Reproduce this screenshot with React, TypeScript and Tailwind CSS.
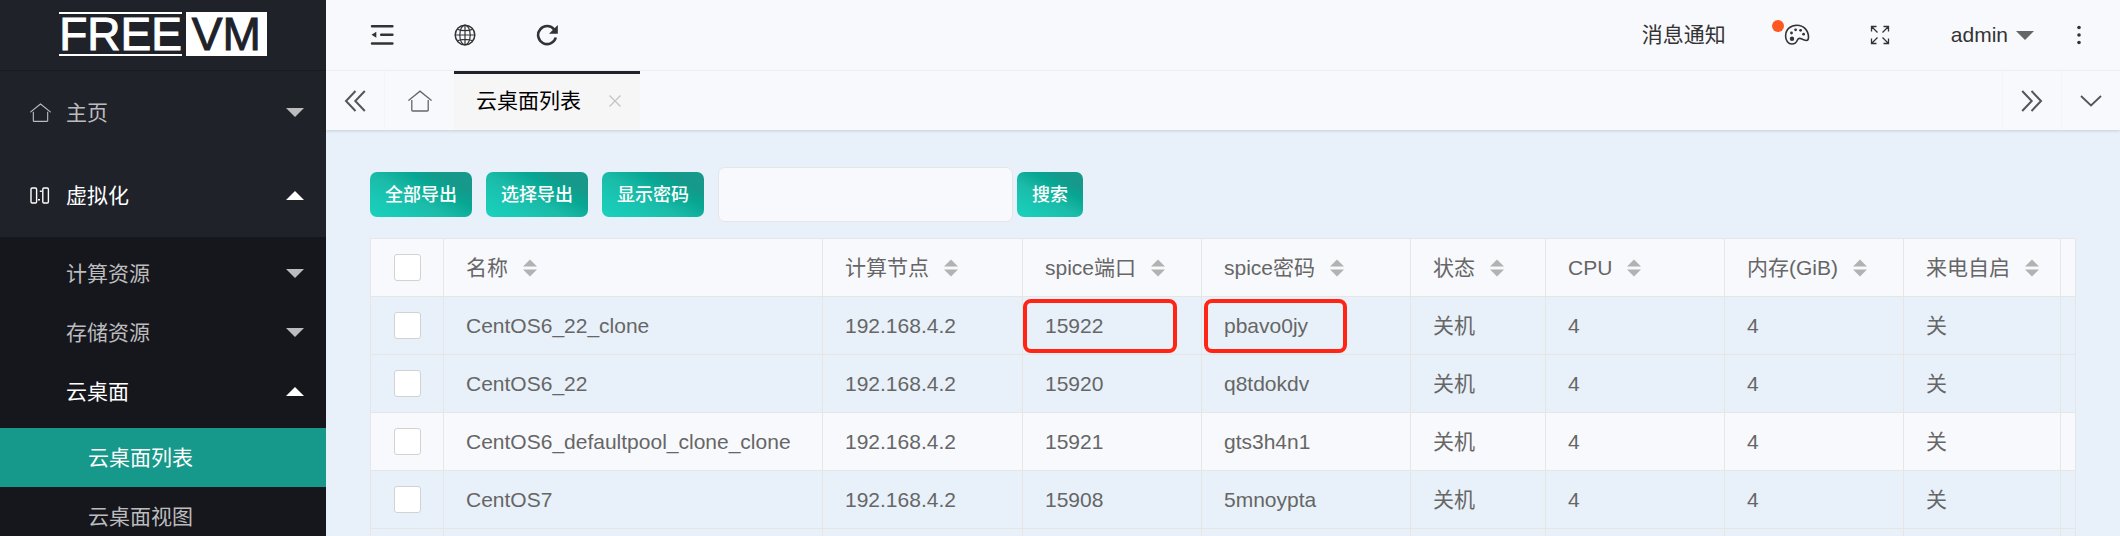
import { useState } from "react";
import type { ReactNode } from "react";
import clsx from "clsx";

interface Vm {
  name: string;
  node: string;
  port: string;
  password: string;
  state: string;
  cpu: number;
  memory: number;
  autostart: string;
  marked?: boolean;
}

const vms: Vm[] = [
  { name: "CentOS6_22_clone", node: "192.168.4.2", port: "15922", password: "pbavo0jy", state: "关机", cpu: 4, memory: 4, autostart: "关", marked: true },
  { name: "CentOS6_22", node: "192.168.4.2", port: "15920", password: "q8tdokdv", state: "关机", cpu: 4, memory: 4, autostart: "关" },
  { name: "CentOS6_defaultpool_clone_clone", node: "192.168.4.2", port: "15921", password: "gts3h4n1", state: "关机", cpu: 4, memory: 4, autostart: "关" },
  { name: "CentOS7", node: "192.168.4.2", port: "15908", password: "5mnoypta", state: "关机", cpu: 4, memory: 4, autostart: "关" },
];

const columns = [
  { label: "名称", width: "" },
  { label: "计算节点", width: "w-[200px]" },
  { label: "spice端口", width: "w-[179px]" },
  { label: "spice密码", width: "w-[209px]" },
  { label: "状态", width: "w-[135px]" },
  { label: "CPU", width: "w-[179px]" },
  { label: "内存(GiB)", width: "w-[179px]" },
  { label: "来电自启", width: "w-[157px]" },
];

function HomeIcon({ className }: { className?: string }) {
  return (
    <svg viewBox="0 0 24 22" fill="none" stroke="currentColor" strokeWidth="1.3" className={className}>
      <path d="M0.8 10.2 12 1.2l11.2 9" strokeLinecap="round" />
      <path d="M3.8 10v10.2a.8.8 0 0 0 .8.8h14.8a.8.8 0 0 0 .8-.8V10" />
    </svg>
  );
}

function ServersIcon() {
  return (
    <svg viewBox="0 0 20 17" fill="none" stroke="currentColor" strokeWidth="1.4" className="w-5">
      <rect x="1" y="1" width="5.600" height="15" rx="1.2" />
      <rect x="12.8" y="1" width="5.600" height="15" rx="1.2" />
      <path d="M9.800 4.200h2M8 12.800h2" strokeWidth="1.400" />
    </svg>
  );
}

function FoldIcon() {
  return (
    <svg viewBox="0 0 24 22" className="w-6" fill="#333" stroke="#333">
      <path d="M2 2.2h20.400M11.200 10.800h11.200M2 19.400h20.400" strokeWidth="2.500" strokeLinecap="round" />
      <path d="M1.500 10.800 6.300 7.800v6z" stroke="none" />
    </svg>
  );
}

function GlobeIcon() {
  return (
    <svg viewBox="0 0 22 22" className="w-[22px]" fill="none" stroke="#333" strokeWidth="1.2">
      <circle cx="11" cy="11" r="9.800" strokeWidth="1.500" />
      <ellipse cx="11" cy="11" rx="5.200" ry="9.800" />
      <path d="M11 1.200v19.600M1.200 11h19.600M3.400 5.200c4 2 11.200 2 15.200 0M3.400 16.800c4-2 11.200-2 15.200 0" />
    </svg>
  );
}

function RefreshIcon() {
  return (
    <svg viewBox="0 0 22 22" className="w-[22px]">
      <path d="M18.200 5.500A9 9 0 1 0 19.800 13.500" fill="none" stroke="#333" strokeWidth="2.600" />
      <path d="M21.800 1v8.800h-8.800z" fill="#333" />
    </svg>
  );
}

function PaletteIcon() {
  return (
    <svg viewBox="0 0 26 22" className="w-[26px]" fill="none" stroke="#333" strokeWidth="1.600">
      <path d="M13 1.200C6.400 1.200 1.600 5.600 1.600 12c0 4.700 2.700 8 6.200 8 3 0 4.700-1.700 5.500-3.700.7-1.800 2.200-2.400 4-1.500 1.900 1 3.700 1.700 5.200 1.700 1.500 0 2-1.300 2-3.200C24.500 6.300 19.500 1.200 13 1.200z" />
      <g fill="#333" stroke="none">
        <circle cx="8" cy="14.800" r="2.200" />
        <circle cx="7.500" cy="9" r="1.400" />
        <circle cx="11.600" cy="5.800" r="1.400" />
        <circle cx="16.600" cy="6.300" r="1.400" />
        <circle cx="19.600" cy="10.200" r="1.400" />
      </g>
    </svg>
  );
}

function FullscreenIcon() {
  return (
    <svg viewBox="0 0 20 20" className="w-5" fill="none" stroke="#333" strokeWidth="1.300">
      <path d="M1.500 6.500v-5h5M1.500 1.500l6 6M13.500 1.500h5v5M18.500 1.500l-6 6M1.500 13.500v5h5M1.500 18.500l6-6M13.500 18.500h5v-5M18.500 18.500l-6-6" />
    </svg>
  );
}

function DoubleChevron({ flip }: { flip?: boolean }) {
  return (
    <svg viewBox="0 0 22 22" className={clsx("w-[22px]", flip && "rotate-180")} fill="none" stroke="#555" strokeWidth="2">
      <path d="M11.500 1 2 11l9.500 10M20.800 1 11.300 11l9.500 10" />
    </svg>
  );
}

function Caret({ up, className }: { up?: boolean; className?: string }) {
  return (
    <svg viewBox="0 0 18 9" className={clsx("w-[18px]", className)} fill="currentColor">
      <path d={up ? "M0 9 9 0l9 9z" : "M0 0h18L9 9z"} />
    </svg>
  );
}

function SortIcon() {
  return (
    <svg viewBox="0 0 14 18" className="w-[14px]" fill="#b2b2b2">
      <path d="M0 7.500 7 .5l7 7zM0 10.500h14l-7 7z" />
    </svg>
  );
}

function Logo() {
  return (
    <div className="flex h-[71px] items-start justify-center gap-1 border-b border-[#191b21] pt-3 text-[46px] leading-[40px] text-white">
      <span className="border-y-2 border-white [-webkit-text-stroke:1px_#fff]">FREE</span>
      <span className="border-2 border-white bg-white px-1 text-[#20222a] [-webkit-text-stroke:1px_#20222a]">VM</span>
    </div>
  );
}

interface NavItemProps {
  label: string;
  icon?: ReactNode;
  open?: boolean;
  onToggle: () => void;
}

function NavItem({ label, icon, open, onToggle }: NavItemProps) {
  return (
    <button
      type="button"
      onClick={onToggle}
      className={clsx(
        "flex w-full items-center pr-[22px] pl-[30px] text-left",
        icon ? "h-[83px]" : "h-[59px]",
        open ? "text-white" : "text-[#bcbcbf]"
      )}
    >
      <span className="w-9">{icon}</span>
      <span className="flex-1">{label}</span>
      <Caret up={open} />
    </button>
  );
}

function Checkbox({ label }: { label: string }) {
  return (
    <input
      type="checkbox"
      aria-label={label}
      className="mx-auto block size-[27px] appearance-none rounded-[3px] border border-[#d2d2d2] bg-white checked:bg-[#16988a]"
    />
  );
}

function ActionButton({ children }: { children: ReactNode }) {
  return (
    <button
      type="button"
      className="h-[45px] rounded-[7px] bg-[linear-gradient(29deg,#1bd1bd_0%,#19c9b5_20%,#1bbca9_42%,#07a693_66%,#16988a_80%,#16988a_100%)] px-[15px] text-lg font-medium text-white"
    >
      {children}
    </button>
  );
}

export default function App() {
  const [open, setOpen] = useState({ home: false, virt: true, compute: false, storage: false, desktop: true });
  const [keyword, setKeyword] = useState("");
  const toggle = (key: keyof typeof open) => setOpen({ ...open, [key]: !open[key] });

  return (
    <div className="flex h-screen overflow-hidden bg-[#e8f1f9] font-['Liberation_Sans','Noto_Sans_CJK_SC',sans-serif] text-[21px] text-[#666]">
      {/* Sidebar */}
      <aside className="w-[326px] shrink-0 overflow-hidden bg-[#20222a]">
        <Logo />
        <nav>
          <NavItem label="主页" icon={<HomeIcon className="w-[21px]" />} open={open.home} onToggle={() => toggle("home")} />
          <NavItem label="虚拟化" icon={<ServersIcon />} open={open.virt} onToggle={() => toggle("virt")} />
          {open.virt && (
            <div className="bg-[#16171c] pt-[7px]">
              <NavItem label="计算资源" open={open.compute} onToggle={() => toggle("compute")} />
              <NavItem label="存储资源" open={open.storage} onToggle={() => toggle("storage")} />
              <NavItem label="云桌面" open={open.desktop} onToggle={() => toggle("desktop")} />
              {open.desktop && (
                <div className="pt-[7px]">
                  <a href="#list" className="flex h-[59px] items-center bg-[#16988a] pl-[88px] text-white">云桌面列表</a>
                  <a href="#view" className="flex h-[59px] items-center pl-[88px] text-[#bcbcbf]">云桌面视图</a>
                </div>
              )}
            </div>
          )}
        </nav>
      </aside>

      <div className="flex min-w-0 flex-1 flex-col">
        {/* Top bar */}
        <header className="flex h-[71px] shrink-0 items-center justify-between border-b border-[#f5f5f6] bg-[#f8f9fd] pr-8 pl-11 text-[#333]">
          <div className="flex items-center gap-[60px]">
            <button type="button" aria-label="侧边伸缩"><FoldIcon /></button>
            <button type="button" aria-label="前台"><GlobeIcon /></button>
            <button type="button" aria-label="刷新"><RefreshIcon /></button>
          </div>
          <div className="flex items-center">
            <a href="#message" className="mr-[58px]">消息通知</a>
            <button type="button" aria-label="主题" className="relative mr-[60px]">
              <PaletteIcon />
              <span className="absolute -top-1 -left-3 size-3 rounded-full bg-[#ff5722]" />
            </button>
            <button type="button" aria-label="全屏" className="mr-[61px]"><FullscreenIcon /></button>
            <button type="button" className="mr-9 flex items-center gap-2">
              admin
              <Caret className="text-[#666]" />
            </button>
            <button type="button" aria-label="更多">
              <svg viewBox="0 0 18 20" className="w-[18px]" fill="#333">
                <circle cx="9" cy="2.500" r="1.800" />
                <circle cx="9" cy="10" r="1.800" />
                <circle cx="9" cy="17.500" r="1.800" />
              </svg>
            </button>
          </div>
        </header>

        {/* Page tabs */}
        <div className="relative flex h-[59px] shrink-0 bg-[#f8f9fd] shadow-[0_1px_3px_rgba(0,0,0,0.15)]">
          <button type="button" aria-label="向左" className="flex w-[59px] items-center justify-center border-r border-[#f5f5f6]">
            <DoubleChevron />
          </button>
          <a href="#home" aria-label="主页" className="flex w-[69px] items-center justify-center">
            <HomeIcon className="w-6" />
          </a>
          <div className="flex w-[186px] items-center justify-between border-t-3 border-[#20222a] bg-[#f6f6f6] pr-[18px] pb-[3px] pl-[22px] text-black">
            <span>云桌面列表</span>
            <button type="button" aria-label="关闭">
              <svg viewBox="0 0 14 14" className="w-[14px]" fill="none" stroke="#c4c4c4" strokeWidth="1.300">
                <path d="m1.500 1.500 11 11M12.500 1.500l-11 11" />
              </svg>
            </button>
          </div>
          <div className="flex-1" />
          <button type="button" aria-label="向右" className="flex w-[59px] items-center justify-center border-l border-[#f5f5f6]">
            <DoubleChevron flip />
          </button>
          <button type="button" aria-label="标签操作" className="flex w-[59px] items-center justify-center border-l border-[#f5f5f6]">
            <svg viewBox="0 0 22 12" className="w-[22px]" fill="none" stroke="#555" strokeWidth="1.800">
              <path d="M1 1l10 9.500L21 1" />
            </svg>
          </button>
        </div>

        <main className="min-h-0 flex-1 overflow-hidden px-11 pt-[37px]">
          <form className="mb-4 flex items-center" onSubmit={(e) => e.preventDefault()}>
            <div className="mr-[14px] flex gap-[14px]">
              <ActionButton>全部导出</ActionButton>
              <ActionButton>选择导出</ActionButton>
              <ActionButton>显示密码</ActionButton>
            </div>
            <input
              type="text"
              aria-label="搜索"
              value={keyword}
              onChange={(e) => setKeyword(e.target.value)}
              className="mr-1 h-[55px] w-[295px] rounded-[7px] border border-[#e6e6e6] bg-[#f8f9fd] px-4"
            />
            <ActionButton>搜索</ActionButton>
          </form>

          <table className="w-full table-fixed border-collapse text-left [&_td]:border [&_td]:border-[#e6e6e6] [&_th]:border [&_th]:border-[#e6e6e6]">
            <thead>
              <tr className="h-[58px] bg-[#f8f9fd]">
                <th className="w-[73px]"><Checkbox label="全选" /></th>
                {columns.map((col) => (
                  <th key={col.label} className={clsx("pl-[22px] font-normal", col.width)}>
                    <span className="flex items-center gap-[15px] whitespace-nowrap">
                      {col.label}
                      <SortIcon />
                    </span>
                  </th>
                ))}
                <th className="w-[15px]" />
              </tr>
            </thead>
            <tbody>
              {vms.map((vm, i) => (
                <tr key={vm.name} className={clsx("h-[58px]", i === 2 && "bg-[#f8f9fd]")}>
                  <td><Checkbox label={vm.name} /></td>
                  <td className="pl-[22px]">{vm.name}</td>
                  <td className="pl-[22px]">{vm.node}</td>
                  <td className="relative pl-[22px]">
                    {vm.port}
                    {vm.marked && <span className="absolute top-[2px] left-0 h-[54px] w-[154px] rounded-lg border-4 border-[#ff2414]" />}
                  </td>
                  <td className="relative pl-[22px]">
                    {vm.password}
                    {vm.marked && <span className="absolute top-[2px] left-[2px] h-[54px] w-[143px] rounded-lg border-4 border-[#ff2414]" />}
                  </td>
                  <td className="pl-[22px]">{vm.state}</td>
                  <td className="pl-[22px]">{vm.cpu}</td>
                  <td className="pl-[22px]">{vm.memory}</td>
                  <td className="pl-[22px]">{vm.autostart}</td>
                  <td />
                </tr>
              ))}
              <tr className="h-[58px]">
                <td />
                {columns.map((col) => <td key={col.label} />)}
                <td />
              </tr>
            </tbody>
          </table>
        </main>
      </div>
    </div>
  );
}
